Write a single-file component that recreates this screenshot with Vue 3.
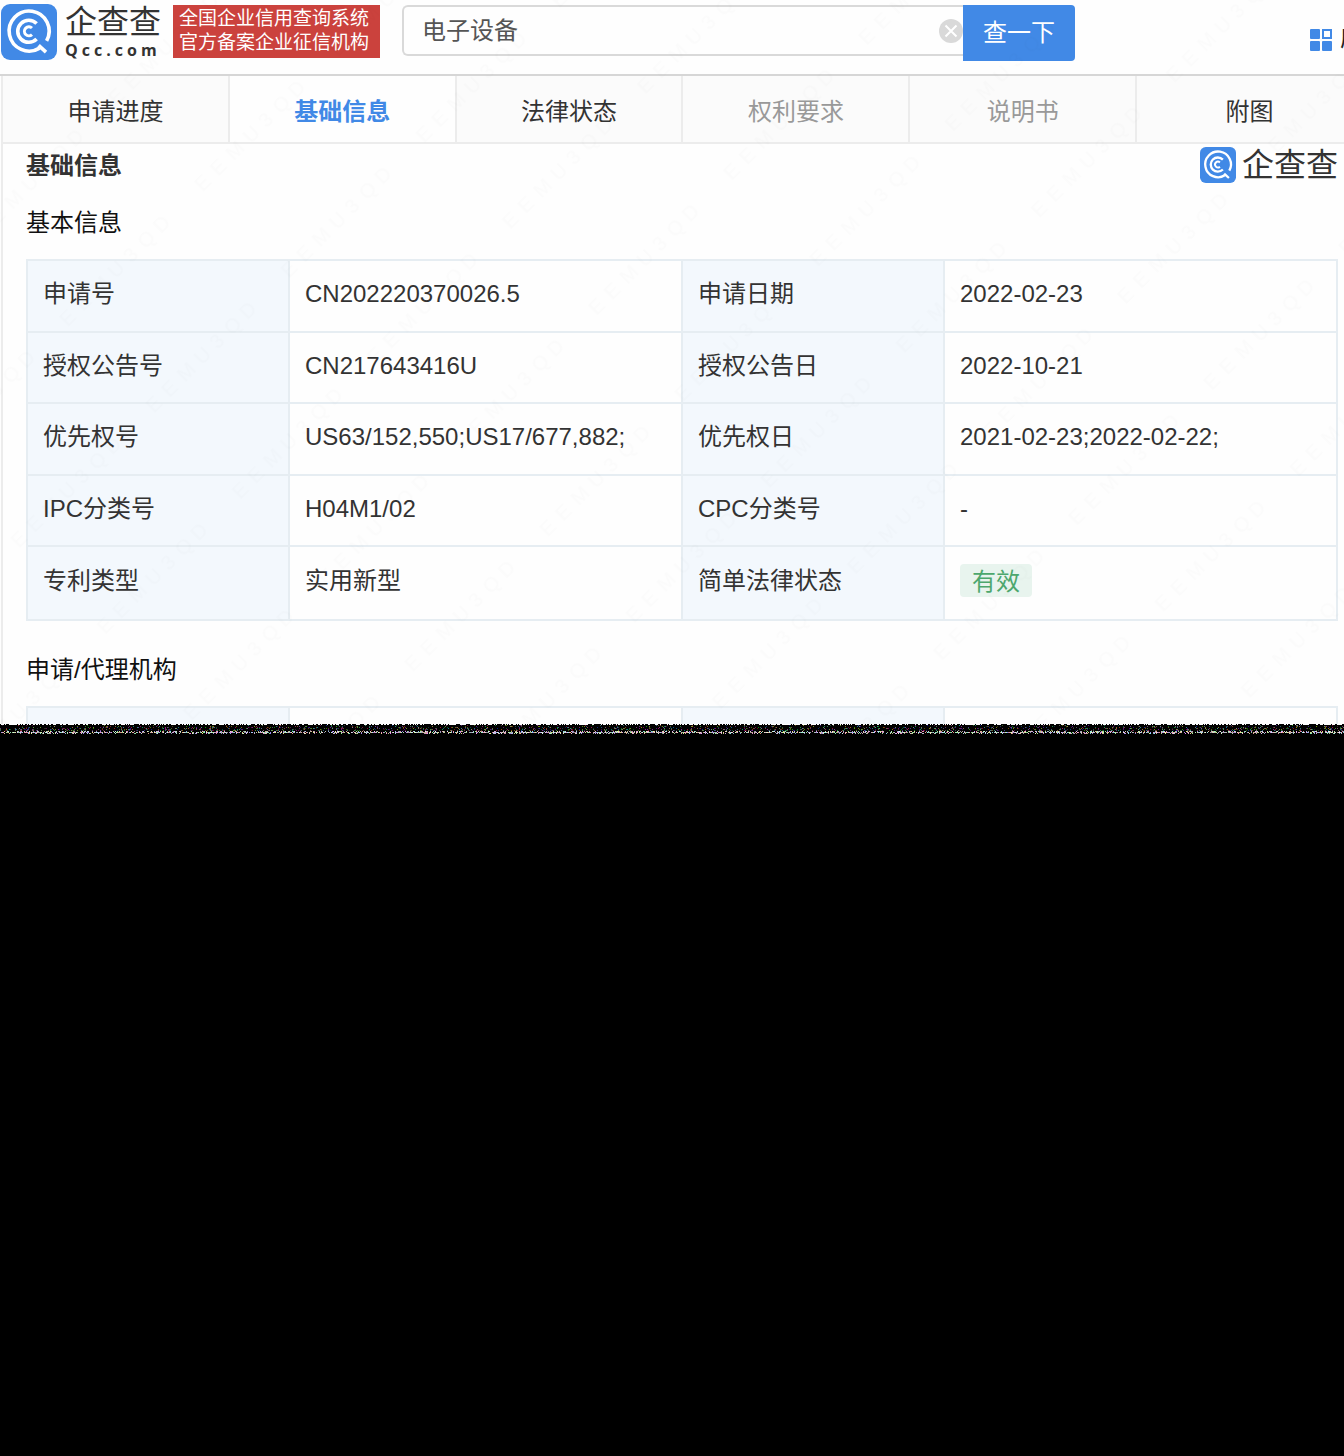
<script setup>
import { onMounted, ref } from 'vue'

const keyword = ref('电子设备')
const noise = ref(null)

const tabs = [
  { label: '申请进度' },
  { label: '基础信息', active: true },
  { label: '法律状态' },
  { label: '权利要求', disabled: true },
  { label: '说明书', disabled: true },
  { label: '附图' },
]

const rows = [
  ['申请号', 'CN202220370026.5', '申请日期', '2022-02-23'],
  ['授权公告号', 'CN217643416U', '授权公告日', '2022-10-21'],
  ['优先权号', 'US63/152,550;US17/677,882;', '优先权日', '2021-02-23;2022-02-22;'],
  ['IPC分类号', 'H04M1/02', 'CPC分类号', '-'],
  ['专利类型', '实用新型', '简单法律状态', '有效'],
]

// Static band between the page and the black area
onMounted(() => {
  const canvas = noise.value
  const width = canvas.clientWidth
  canvas.width = width
  canvas.height = 10
  const ctx = canvas.getContext('2d')
  let seed = 7
  const random = () => {
    seed = (seed * 1664525 + 1013904223) % 4294967296
    return seed / 4294967296
  }
  const density = [0, 0.07, 0.16, 0.2, 0.22, 0.24, 0.3, 0.4, 0.7, 0.25]
  for (let y = 0; y < 10; y++) {
    for (let x = 0; x < width; x++) {
      if (y === 0) {
        if (random() < 0.45) {
          ctx.fillStyle = '#000'
          ctx.fillRect(x, y, 1, 1)
        }
        continue
      }
      let color = '#000'
      if (random() < density[y]) {
        const bright = y > 6 ? 255 : 150
        const base = y > 6 ? 130 : 0
        const c = () => Math.floor(base + random() * (bright - base))
        color = `rgb(${c()},${c()},${c()})`
      }
      ctx.fillStyle = color
      ctx.fillRect(x, y, 1, 1)
    }
  }
})
</script>

<template>
  <div class="screen">
    <svg width="0" height="0" class="defs" aria-hidden="true">
      <symbol id="mark" viewBox="0 0 56 56">
        <rect width="56" height="56" rx="9" fill="#4189e6" />
        <g fill="none" stroke="#fff" stroke-width="3.6">
          <path d="M45.6 36.8A20 20 0 1 0 38.6 44.1" />
          <path d="M37.6 41.4L45 48.2" />
          <path d="M35.6 19.6A11 11 0 1 0 35.6 35" />
          <path d="M31 24A4.5 4.5 0 1 0 31 30.6" stroke-width="3" />
        </g>
      </symbol>
    </svg>

    <div class="page">
      <header class="header">
        <a href="#" class="brand">
          <svg class="brand-mark" aria-hidden="true"><use href="#mark" /></svg>
          <span class="brand-text">
            <span class="brand-name">企查查</span>
            <span class="brand-domain">Qcc.com</span>
          </span>
        </a>
        <p class="slogan">全国企业信用查询系统<br />官方备案企业征信机构</p>
        <form class="search" @submit.prevent>
          <input v-model="keyword" type="text" aria-label="搜索关键词" class="search-input" />
          <button type="button" class="clear" aria-label="清空" @click="keyword = ''">
            <svg viewBox="0 0 24 24" aria-hidden="true">
              <circle cx="12" cy="12" r="12" fill="#d9d9d9" />
              <path d="M6.5 6.5l11 11M17.5 6.5l-11 11" stroke="#fff" stroke-width="2" />
            </svg>
          </button>
          <button type="submit" class="submit">查一下</button>
        </form>
        <a href="#" class="apps">
          <svg viewBox="0 0 22 22" class="apps-icon" aria-hidden="true">
            <g fill="#4189e6">
              <rect width="10" height="10" rx="1" />
              <rect y="12" width="10" height="10" rx="1" />
              <rect x="12" y="12" width="10" height="10" rx="1" />
            </g>
            <rect x="13" y="1" width="8" height="8" fill="#fff" stroke="#4189e6" stroke-width="2" />
          </svg>
          <span>应用</span>
        </a>
      </header>

      <main class="main">
        <nav class="tabs">
          <a
            v-for="tab in tabs"
            :key="tab.label"
            href="#"
            class="tab"
            :class="{ active: tab.active, disabled: tab.disabled }"
          >{{ tab.label }}</a>
        </nav>

        <section class="content">
          <div class="title-row">
            <h1 class="title">基础信息</h1>
            <div class="stamp">
              <svg class="stamp-mark" aria-hidden="true"><use href="#mark" /></svg>
              <span class="brand-name">企查查</span>
            </div>
          </div>

          <h2 class="subtitle">基本信息</h2>
          <table class="info">
            <tbody>
              <tr v-for="row in rows" :key="row[0]">
                <th scope="row">{{ row[0] }}</th>
                <td>{{ row[1] }}</td>
                <th scope="row">{{ row[2] }}</th>
                <td>
                  <span v-if="row[3] === '有效'" class="tag">{{ row[3] }}</span>
                  <template v-else>{{ row[3] }}</template>
                </td>
              </tr>
            </tbody>
          </table>

          <h2 class="subtitle agency">申请/代理机构</h2>
          <table class="info cut">
            <tbody>
              <tr><th></th><td></td><th></th><td></td></tr>
            </tbody>
          </table>
        </section>
      </main>

      <svg class="watermark" aria-hidden="true">
        <defs>
          <pattern id="wm" width="191" height="122" patternUnits="userSpaceOnUse" patternTransform="translate(186 181) rotate(-45)">
            <text x="4 26 48 72 94 114 136" y="20">EEMU3QD</text>
          </pattern>
        </defs>
        <rect width="100%" height="100%" fill="url(#wm)" />
      </svg>
      <canvas ref="noise" class="noise" aria-hidden="true"></canvas>
    </div>
  </div>
</template>

<style>
body {
  margin: 0;
  background: #000;
}
</style>

<style scoped>
* {
  box-sizing: border-box;
}

.screen {
  min-height: 100vh;
  overflow: hidden;
  background: #000;
  color: #333;
  font-family: "Liberation Sans", "Noto Sans CJK SC", sans-serif;
  font-size: 24px;
}

.defs {
  position: absolute;
}

a {
  color: inherit;
  text-decoration: none;
}

.page {
  position: relative;
  overflow: hidden;
  background: #fefefe;
}

.header {
  display: flex;
  align-items: flex-start;
  height: 76px;
  padding: 4px 0 0 1px;
  border-bottom: 2px solid #d6d6d6;
}

.brand {
  display: flex;
  gap: 8px;
}

.brand-mark {
  width: 56px;
  height: 56px;
}

.brand-text {
  display: flex;
  flex-direction: column;
  width: 100px;
}

.brand-name {
  font-size: 32px;
  line-height: 36px;
  color: #333;
}

.brand-domain {
  font-family: "Open Sans", sans-serif;
  font-size: 16px;
  font-weight: 700;
  line-height: 20px;
  letter-spacing: 4px;
}

.slogan {
  margin: 1px 0 0 8px;
  padding: 2px 6px 3px;
  width: 207px;
  background: #cb423d;
  color: #fff;
  font-size: 19px;
  line-height: 24px;
  white-space: nowrap;
}

.search {
  position: relative;
  display: flex;
  align-items: flex-start;
  width: 673px;
  margin: 1px 0 0 22px;
}

.search-input {
  flex: 1;
  min-width: 0;
  height: 51px;
  padding: 0 50px 4px 18px;
  border: 2px solid #d9d9d9;
  border-right: 0;
  border-radius: 6px 0 0 6px;
  background: #fefefe;
  color: #555;
  font: inherit;
  outline: 0;
}

.clear {
  position: absolute;
  top: 14px;
  right: 112px;
  width: 24px;
  height: 24px;
  padding: 0;
  border: 0;
  background: none;
}

.clear svg {
  display: block;
}

.submit {
  width: 112px;
  height: 56px;
  padding: 0 0 6px;
  border: 0;
  border-radius: 0 4px 4px 0;
  background: #4189e6;
  color: #fff;
  font: inherit;
}

.apps {
  display: flex;
  align-items: center;
  gap: 8px;
  width: 34px;
  height: 36px;
  margin: 18px 0 0 auto;
  color: #222;
  line-height: 32px;
  white-space: nowrap;
}

.apps span {
  padding-bottom: 4px;
}

.apps-icon {
  flex: none;
  width: 22px;
  height: 22px;
}

.main {
  margin-left: 1px;
  border-left: 2px solid #ececec;
}

.tabs {
  display: flex;
  margin-right: -20px;
}

.tab {
  flex: 1;
  height: 68px;
  border-right: 2px solid #ececec;
  border-bottom: 2px solid #ececec;
  background: #fbfbfb;
  line-height: 72px;
  text-align: center;
}

.tab.active {
  background: #fefefe;
  color: #4189e6;
  font-weight: 700;
}

.tab.disabled {
  color: #999;
}

.content {
  padding: 0 6px 0 23px;
}

.title-row {
  display: flex;
  justify-content: space-between;
  height: 42px;
}

.title {
  margin: 0;
  font-size: 24px;
  line-height: 44px;
}

.stamp {
  display: flex;
  align-items: center;
  gap: 6px;
}

.stamp-mark {
  width: 36px;
  height: 36px;
}

.subtitle {
  margin: 0;
  color: #111;
  font-size: 24px;
  font-weight: 400;
  line-height: 73px;
}

.agency {
  padding-top: 12px;
}

.info {
  width: 100%;
  border-collapse: collapse;
  table-layout: fixed;
}

.info th,
.info td {
  height: 72px;
  padding: 0 15px 4px;
  border: 2px solid #e6edf2;
  font-weight: 400;
  line-height: 36px;
  text-align: left;
}

.info th {
  width: 20%;
  background: #f3f8fd;
}

.info td {
  width: 30%;
}

.info tr:nth-child(even) > * {
  height: 71px;
}

.info tr:last-child > * {
  height: 74px;
}

.info.cut tr > * {
  height: 17px;
  padding: 0;
  border-bottom: 0;
}

.tag {
  display: block;
  width: max-content;
  margin-bottom: 2px;
  padding: 2px 12px 0;
  border-radius: 4px;
  background: #e8f4ee;
  color: #4da76d;
  line-height: 31px;
}

.watermark {
  position: absolute;
  inset: 0;
  width: 100%;
  height: 100%;
  fill: rgba(0, 0, 0, 0.01);
  font-size: 20px;
  pointer-events: none;
}

.noise {
  position: relative;
  display: block;
  width: 100%;
  height: 10px;
}
</style>
